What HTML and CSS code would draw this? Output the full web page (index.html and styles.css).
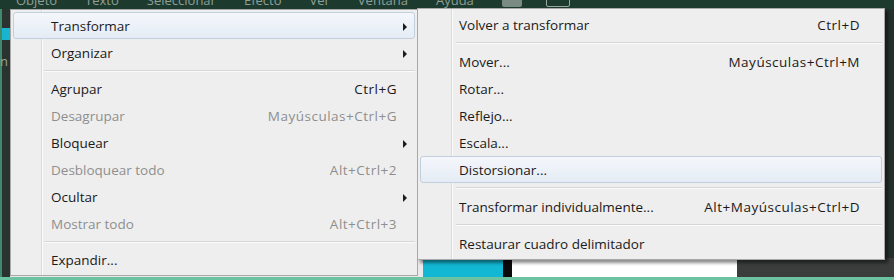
FILE: index.html
```html
<!DOCTYPE html>
<html lang="es">
<head>
    <meta charset="UTF-8">
    <meta name="viewport" content="width=device-width, initial-scale=1.0">
    <title>Objeto - Transformar</title>
    <link rel="stylesheet" href="styles.css">
</head>
<body>
    <div class="app">
        <div class="menubar">
            <span>Objeto</span>
            <span>Texto</span>
            <span>Seleccionar</span>
            <span>Efecto</span>
            <span>Ver</span>
            <span>Ventana</span>
            <span>Ayuda</span>
            <i class="bar-icon"></i>
            <i class="bar-icon outline"></i>
        </div>

        <div class="workarea">
            <div class="toolstrip">
                <span class="tool-swatch"></span>
                <span class="tool-letter">n</span>
            </div>
            <div class="document">
                <div class="doc-bottom">
                    <span class="block block-dark"></span>
                    <span class="block block-cyan"></span>
                    <span class="block block-black"></span>
                    <span class="block block-white"></span>
                    <span class="block block-gray"></span>
                </div>
            </div>
        </div>
        <div class="status-line"></div>

        <!-- menu Objeto -->
        <ul class="menu main-menu">
            <li class="item active"><span class="label">Transformar</span><span class="key"></span><span class="arrow"></span></li>
            <li class="item"><span class="label">Organizar</span><span class="key"></span><span class="arrow"></span></li>
            <li class="sep"></li>
            <li class="item"><span class="label">Agrupar</span><span class="key">Ctrl+G</span><span></span></li>
            <li class="item disabled"><span class="label">Desagrupar</span><span class="key">Mayúsculas+Ctrl+G</span><span></span></li>
            <li class="item"><span class="label">Bloquear</span><span class="key"></span><span class="arrow"></span></li>
            <li class="item disabled"><span class="label">Desbloquear todo</span><span class="key">Alt+Ctrl+2</span><span></span></li>
            <li class="item"><span class="label">Ocultar</span><span class="key"></span><span class="arrow"></span></li>
            <li class="item disabled"><span class="label">Mostrar todo</span><span class="key">Alt+Ctrl+3</span><span></span></li>
            <li class="sep"></li>
            <li class="item"><span class="label">Expandir...</span><span class="key"></span><span></span></li>
        </ul>

        <!-- submenu Transformar -->
        <ul class="menu sub-menu">
            <li class="item"><span class="label">Volver a transformar</span><span class="key">Ctrl+D</span></li>
            <li class="sep"></li>
            <li class="item"><span class="label">Mover...</span><span class="key">Mayúsculas+Ctrl+M</span></li>
            <li class="item"><span class="label">Rotar...</span><span class="key"></span></li>
            <li class="item"><span class="label">Reflejo...</span><span class="key"></span></li>
            <li class="item"><span class="label">Escala...</span><span class="key"></span></li>
            <li class="item active"><span class="label">Distorsionar...</span><span class="key"></span></li>
            <li class="sep"></li>
            <li class="item"><span class="label">Transformar individualmente...</span><span class="key">Alt+Mayúsculas+Ctrl+D</span></li>
            <li class="sep"></li>
            <li class="item"><span class="label">Restaurar cuadro delimitador</span><span class="key"></span></li>
        </ul>
    </div>
</body>
</html>
```

FILE: styles.css
```css
body {
    margin: 0;
    padding: 0;
    background-color: #1f2b26;
    font-family: 'Open Sans', 'Noto Sans', sans-serif;
}

.app {
    position: relative;
    width: 894px;
    height: 280px;
    display: flex;
    flex-direction: column;
    overflow: hidden;
    background-color: #1f2b26;
}

/* barra de menus, casi toda cortada por arriba */
.menubar {
    height: 9px;
    flex-shrink: 0;
    display: flex;
    align-items: flex-end;
    gap: 28px;
    padding-left: 16px;
    overflow: hidden;
    background-color: #1d3a2e;
}

.menubar span {
    line-height: 18px;
    height: 18px;
    font-size: 13px;
    color: #8e9f96;
}

.bar-icon {
    display: block;
    width: 20px;
    height: 14px;
    margin-bottom: 2px;
    border-radius: 2px;
    background-color: #7c8a84;
    align-self: flex-end;
}

.bar-icon.outline {
    width: 22px;
    background-color: transparent;
    border: 1px solid #9aa8a1;
    margin-left: -4px;
}

.workarea {
    flex: 1;
    display: flex;
}

.toolstrip {
    width: 8px;
    border-left: 2px solid #3f8a6c;
    background-color: #2b3330;
    display: flex;
    flex-direction: column;
}

.tool-swatch {
    margin-top: 19px;
    height: 12px;
    background-color: #19b4cf;
}

.tool-letter {
    margin-top: 14px;
    font-size: 13px;
    line-height: 14px;
    color: #9aa59f;
    margin-left: -2px;
}

.document {
    flex: 1;
    display: flex;
    flex-direction: column;
    justify-content: flex-end;
    background-color: #25302c;
}

.doc-bottom {
    height: 19px;
    display: flex;
}

.block {
    display: block;
    height: 100%;
}

.block-dark {
    width: 413px;
    background-color: #e9e9e9;
}

.block-cyan {
    width: 80px;
    background-color: #12b7d3;
}

.block-black {
    width: 9px;
    background-color: #0a0a0a;
}

.block-white {
    width: 225px;
    background-color: #ffffff;
}

.block-gray {
    flex: 1;
    background-color: #3b3d3d;
}

.status-line {
    height: 3px;
    flex-shrink: 0;
    background-color: #6cc3a2;
}

/* menus desplegables */
.menu {
    position: absolute;
    list-style: none;
    margin: 0;
    padding: 2px;
    box-sizing: border-box;
    background-color: #eeeeee;
    border: 1px solid #a9a9a9;
    font-size: 13.5px;
    color: #1a1a1a;
}

.main-menu {
    left: 10px;
    top: 9px;
    width: 408px;
    height: 267px;
    background-image: linear-gradient(to right, transparent 30px, #dadada 30px, #dadada 31px, #fbfbfb 31px, #fbfbfb 32px, transparent 32px);
}

.sub-menu {
    left: 417px;
    top: 8px;
    width: 468px;
    padding: 2px 2px 2px 2px;
    background-image: linear-gradient(to right, transparent 33px, #dadada 33px, #dadada 34px, #fbfbfb 34px, #fbfbfb 35px, transparent 35px);
    box-shadow: 3px 3px 3px rgba(0, 0, 0, 0.45);
}

.item {
    height: 27px;
    line-height: 27px;
    display: grid;
    align-items: center;
    box-sizing: border-box;
    border: 1px solid transparent;
    border-radius: 3px;
    white-space: nowrap;
}

.main-menu .item {
    grid-template-columns: 1fr auto 17px;
    padding-left: 37px;
}

.sub-menu .item {
    grid-template-columns: 1fr auto;
    padding-left: 38px;
    padding-right: 21px;
}

.item.active {
    border-color: #c3cfdd;
    background: linear-gradient(#f4f7fb, #e5ecf5);
}

.item.disabled {
    color: #8e8e8e;
}

.key {
    text-align: right;
    letter-spacing: 0.5px;
}

.arrow {
    justify-self: start;
    margin-left: 6px;
    width: 0;
    height: 0;
    border-top: 4px solid transparent;
    border-bottom: 4px solid transparent;
    border-left: 4px solid #1c1c1c;
}

.sep {
    height: 10px;
    display: flex;
    flex-direction: column;
    justify-content: center;
}

.sep::before {
    content: "";
    display: block;
    height: 1px;
    background-color: #d6d6d6;
    border-bottom: 1px solid #fbfbfb;
}

.main-menu .sep {
    height: 9px;
    margin-left: 31px;
}

.sub-menu .sep {
    margin-left: 36px;
}
```
